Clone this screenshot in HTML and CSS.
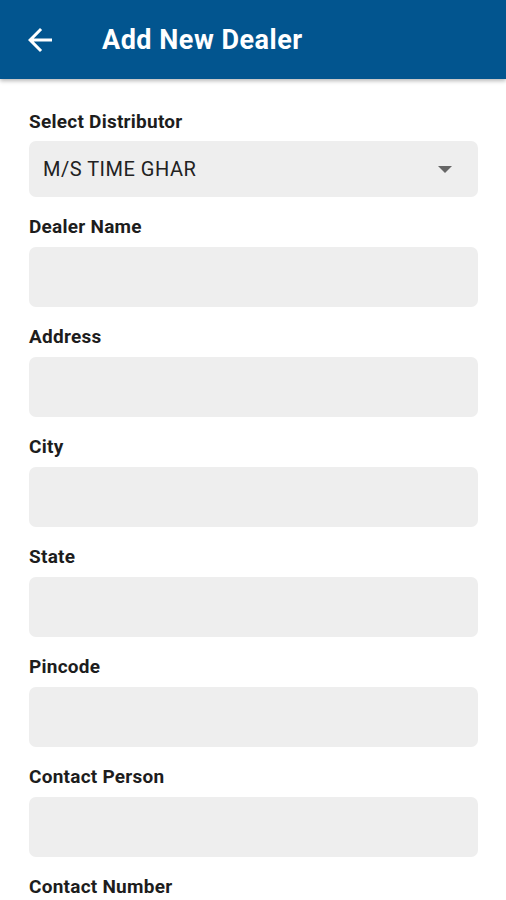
FILE: index.html
```html
<!DOCTYPE html>
<html>
<head>
<meta charset="utf-8">
<link rel="stylesheet" href="styles.css">
</head>
<body>
<header class="appbar">
  <svg class="back" viewBox="0 0 24 24" width="36" height="36"><path d="M20 11H7.83l5.59-5.59L12 4l-8 8 8 8 1.41-1.41L7.83 13H20v-2z" fill="#fff"/></svg>
  <h1 class="title">Add New Dealer</h1>
</header>
<main class="form">
  <div class="field">
    <label class="label">Select Distributor</label>
    <div class="select">
      <span class="select-text">M/S TIME GHAR</span>
      <svg class="caret" viewBox="0 0 14 7" width="14" height="7"><path d="M0 0h14L7 7z" fill="#666"/></svg>
    </div>
  </div>
  <div class="field">
    <label class="label">Dealer Name</label>
    <input class="input" type="text">
  </div>
  <div class="field">
    <label class="label">Address</label>
    <input class="input" type="text">
  </div>
  <div class="field">
    <label class="label">City</label>
    <input class="input" type="text">
  </div>
  <div class="field">
    <label class="label">State</label>
    <input class="input" type="text">
  </div>
  <div class="field">
    <label class="label">Pincode</label>
    <input class="input" type="text">
  </div>
  <div class="field">
    <label class="label">Contact Person</label>
    <input class="input" type="text">
  </div>
  <div class="field">
    <label class="label">Contact Number</label>
    <input class="input" type="text">
  </div>
</main>
</body>
</html>
```
FILE: styles.css
```css
html, body {
  margin: 0;
  padding: 0;
  background: #fff;
  font-family: Roboto, "Liberation Sans", sans-serif;
  overflow: hidden;
  height: 900px;
}
.appbar {
  height: 79px;
  background: #02558f;
  display: flex;
  align-items: center;
  padding-left: 22px;
  box-sizing: border-box;
  box-shadow: 0 2px 4px rgba(0, 0, 0, 0.28);
  position: relative;
  z-index: 1;
}
.back {
  display: block;
  flex: none;
}
.title {
  margin: 0 0 0 44px;
  color: #fff;
  font-size: 27px;
  font-weight: 700;
  line-height: 30px;
  letter-spacing: 0.5px;
}
.form {
  padding: 32px 28px 0 29px;
  display: flex;
  flex-direction: column;
  gap: 19px;
}
.field {
  display: flex;
  flex-direction: column;
  gap: 8px;
}
.label {
  font-size: 19px;
  line-height: 22px;
  font-weight: 700;
  color: #1d1d1d;
  letter-spacing: 0.25px;
}
.select {
  height: 56px;
  background: #eeeeee;
  border-radius: 7px;
  display: flex;
  align-items: center;
  justify-content: space-between;
  padding: 0 26px 0 14px;
}
.select-text {
  font-size: 20px;
  letter-spacing: 0.5px;
  color: #222;
}
.caret {
  display: block;
}
.input {
  display: block;
  width: 100%;
  height: 60px;
  box-sizing: border-box;
  border: none;
  border-radius: 7px;
  background: #eeeeee;
  margin-top: 1px;
  outline: none;
}
```
